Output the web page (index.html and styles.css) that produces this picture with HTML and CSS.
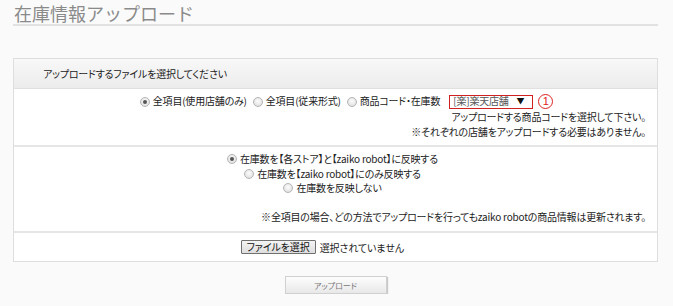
FILE: index.html
```html
<!DOCTYPE html>
<html lang="ja">
<head>
<meta charset="utf-8">
<link rel="stylesheet" href="styles.css">
</head>
<body>
<div class="page">
  <h1 class="title">在庫情報アップロード</h1>
  <div class="box">
    <div class="box-head">アップロードするファイルを選択してください</div>
    <div class="row row-type">
      <div class="line line-center">
        <label class="opt"><span class="radio checked"></span>全項目(使用店舗のみ)</label>
        <label class="opt"><span class="radio"></span>全項目(従来形式)</label>
        <label class="opt"><span class="radio"></span>商品コード・在庫数</label>
        <span class="select">[楽]楽天店舗<span class="arrow">▼</span></span>
        <span class="num">1</span>
      </div>
      <div class="line line-right">アップロードする商品コードを選択して下さい。</div>
      <div class="line line-right">※それぞれの店舗をアップロードする必要はありません。</div>
    </div>
    <div class="row row-stock">
      <div class="line line-center"><label class="opt"><span class="radio checked"></span>在庫数を【各ストア】と【zaiko robot】に反映する</label></div>
      <div class="line line-center"><label class="opt"><span class="radio"></span>在庫数を【zaiko robot】にのみ反映する</label></div>
      <div class="line line-center"><label class="opt"><span class="radio"></span>在庫数を反映しない</label></div>
      <div class="line line-right note">※全項目の場合、どの方法でアップロードを行ってもzaiko robotの商品情報は更新されます。</div>
    </div>
    <div class="row row-file">
      <div class="file">
        <span class="file-btn">ファイルを選択</span>
        <span class="file-name">選択されていません</span>
      </div>
    </div>
  </div>
  <div class="actions">
    <span class="upload-btn">アップロード</span>
  </div>
</div>
</body>
</html>
```
FILE: styles.css
```css
html, body {
  margin: 0;
  padding: 0;
  background: #fafafa;
}
body {
  font-family: "Noto Sans CJK JP", "Liberation Sans", sans-serif;
  font-size: 10px;
  color: #222;
  font-feature-settings: "palt";
}
.page {
  padding-left: 13px;
  width: 645px;
}
.title {
  margin: 0;
  padding: 3px 0 0 1px;
  height: 21px;
  font-size: 18px;
  line-height: 20px;
  font-weight: normal;
  color: #8a8a8a;
  border-bottom: 2px solid #e2e2e2;
  font-feature-settings: normal;
  letter-spacing: 0;
}
.box {
  margin-top: 32px;
  background: #fff;
  border: 1px solid #dedede;
}
.box-head {
  height: 29px;
  line-height: 29px;
  padding-left: 29px;
  background: linear-gradient(#f8f8f8, #ececec);
  border-bottom: 1px solid #e0e0e0;
  letter-spacing: -0.2px;
}
.row {
  border-bottom: 2px solid #e6e6e6;
}
.row:last-child {
  border-bottom: none;
}
.row-type {
  padding: 5px 11px 6px 11px;
  height: 45px;
}
.row-stock {
  padding: 5px 11px 6px 11px;
  height: 73px;
}
.row-file {
  height: 28px;
  display: flex;
  align-items: center;
  justify-content: center;
}
.line {
  display: flex;
  align-items: center;
  height: 14.5px;
  line-height: 14.5px;
  letter-spacing: -0.2px;
}
.line-center {
  justify-content: center;
}
.row-type .line-center {
  padding-left: 22px;
  margin-bottom: 1px;
  height: 15px;
}
.line-right {
  justify-content: flex-end;
}
.note {
  margin-top: 14px;
}
.opt {
  display: inline-flex;
  align-items: center;
  margin-right: 6px;
}
.radio {
  display: inline-block;
  box-sizing: border-box;
  width: 10px;
  height: 10px;
  border-radius: 50%;
  border: 1px solid #b5b5b5;
  background: radial-gradient(circle at 50% 40%, #fdfdfd, #d8d8d8);
  margin-right: 3px;
  position: relative;
}
.radio.checked::after {
  content: "";
  position: absolute;
  left: 2px;
  top: 2px;
  width: 4px;
  height: 4px;
  border-radius: 50%;
  background: #555;
}
.select {
  display: inline-flex;
  align-items: center;
  box-sizing: border-box;
  width: 84px;
  height: 14px;
  border: 1px solid #d21f1f;
  padding-left: 3px;
  color: #555;
  margin-left: 3px;
}
.arrow {
  margin-left: auto;
  margin-right: 8px;
  font-size: 8px;
  color: #111;
}
.num {
  display: inline-flex;
  align-items: center;
  justify-content: center;
  box-sizing: border-box;
  width: 15px;
  height: 15px;
  margin-left: 5px;
  border: 1px solid #e02020;
  border-radius: 50%;
  color: #e02020;
  font-family: "Liberation Sans", sans-serif;
  font-size: 11px;
  line-height: 13px;
  letter-spacing: 0;
}
.file {
  display: flex;
  align-items: center;
  width: 190px;
}
.file-btn {
  display: inline-block;
  box-sizing: border-box;
  height: 14px;
  line-height: 12px;
  padding: 0 5px;
  border: 1px solid #707070;
  border-radius: 1px;
  background: linear-gradient(#f4f4f4, #dedede);
  color: #111;
  letter-spacing: -0.1px;
}
.file-name {
  margin-left: 4px;
  letter-spacing: -0.1px;
}
.actions {
  display: flex;
  justify-content: center;
  padding-top: 14px;
}
.upload-btn {
  display: inline-flex;
  align-items: center;
  justify-content: center;
  box-sizing: border-box;
  width: 102px;
  height: 18px;
  border: 1px solid #d0d0d0;
  background: linear-gradient(#fdfdfd, #e8e8e8);
  box-shadow: 1px 1px 1px #c8c8c8;
  color: #777;
  font-size: 8px;
}
```
